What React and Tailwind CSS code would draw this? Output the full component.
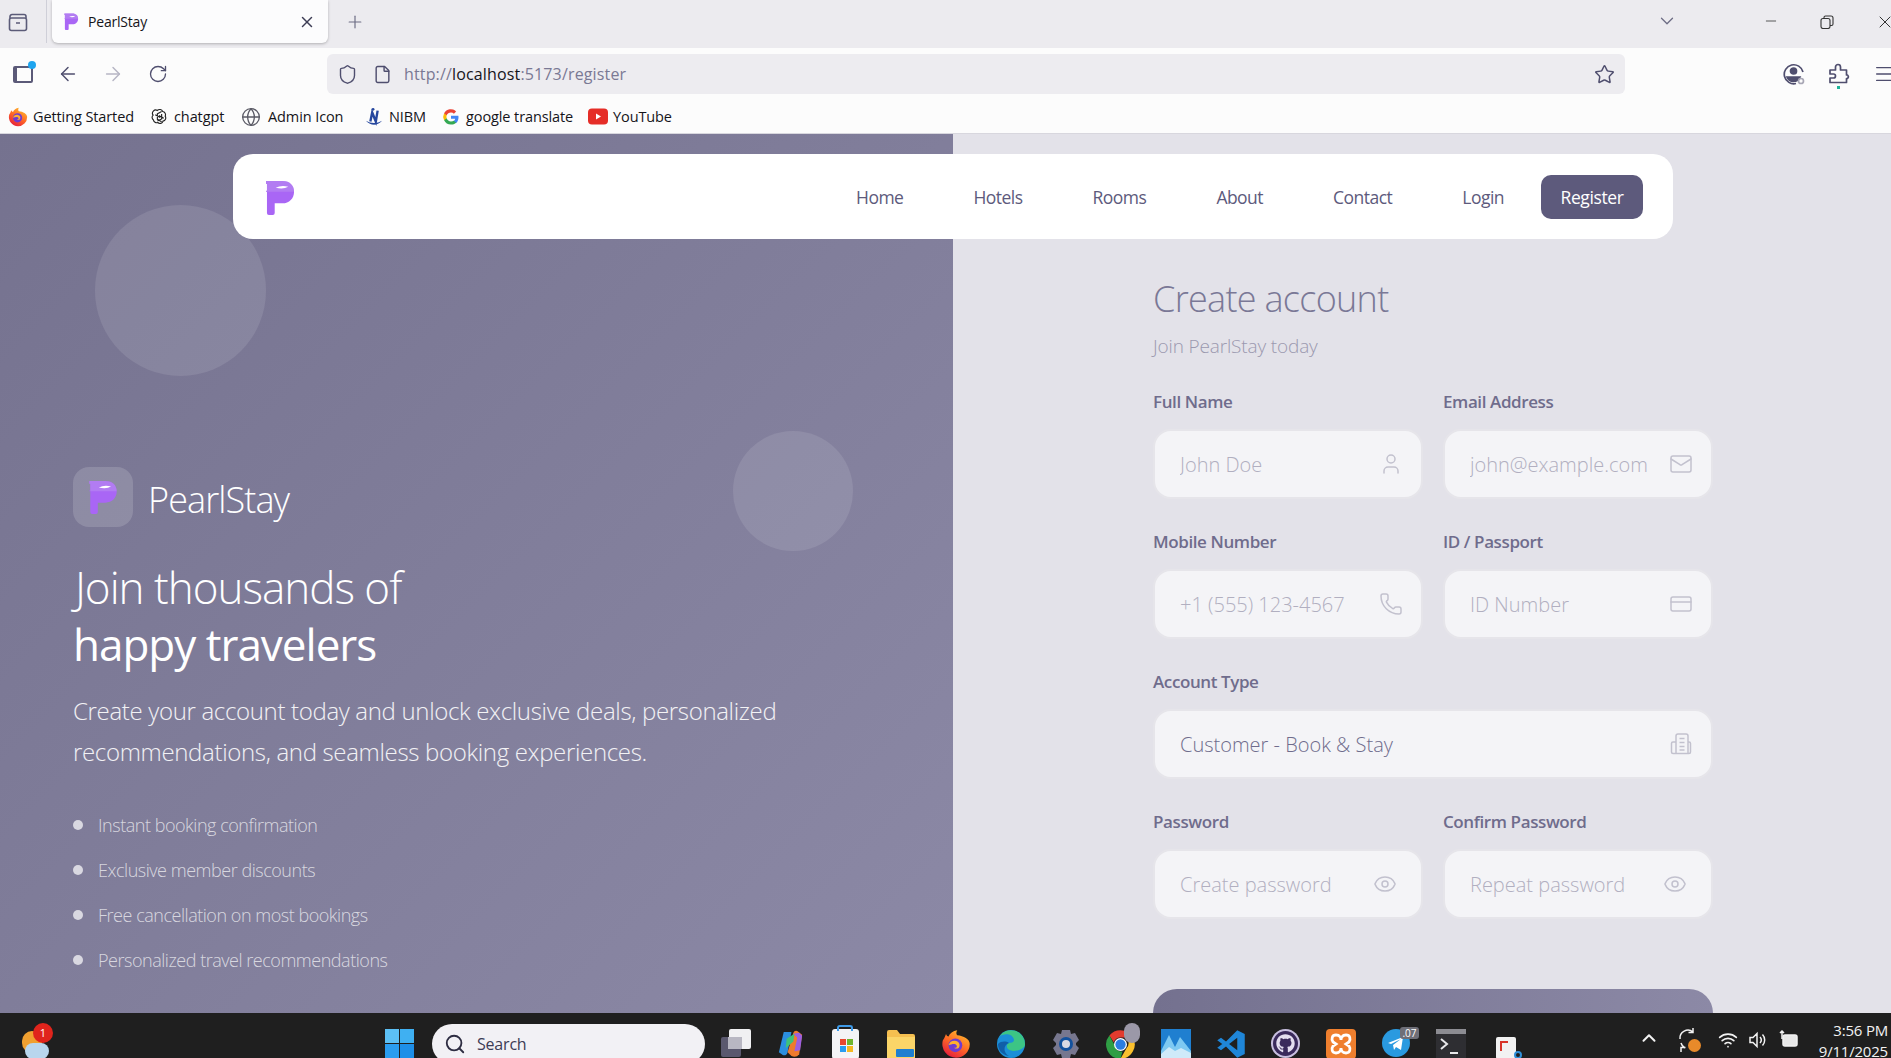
import { useId } from 'react'
import { FaGithub } from 'react-icons/fa'
import {
  ArrowLeft, ArrowRight, ChevronDown, ChevronUp, CreditCard, Eye, File, Globe, Mail, Menu, Minus, Phone, Plus,
  Search, RotateCw, Shield, Star, User, Wifi, X,
} from 'lucide-react'

const navLinks = ['Home', 'Hotels', 'Rooms', 'About', 'Contact', 'Login']

const perks = [
  'Instant booking confirmation',
  'Exclusive member discounts',
  'Free cancellation on most bookings',
  'Personalized travel recommendations',
]

function PearlLogo({ className }) {
  return (
    <svg viewBox="0 0 30 36" className={className}>
      <path d="M0 1H17C25 1 29 6 29 12C29 19 24 24 17 24H9V34Q9 36 7 36H3Q1 36 1 34V12H0V11H1V4H0Z" fill="#a966f5" />
      <path d="M0 1H17C25 1 29 6 29 12H1V4H0Z" fill="#b98af0" opacity="0.6" />
      <path d="M10 8Q16 5 23 7Q18 10 10 8Z" fill="#fff" />
    </svg>
  )
}

function BuildingIcon({ className }) {
  return (
    <svg viewBox="0 0 24 24" fill="none" stroke="currentColor" strokeWidth="1.5" className={className}>
      <path d="M7 21V4a2 2 0 0 1 2-2h8a2 2 0 0 1 2 2v17" />
      <path d="M7 10H4a1.5 1.5 0 0 0-1.5 1.5V20A1.5 1.5 0 0 0 4 21.5h16a1.5 1.5 0 0 0 1.5-1.5v-8.5A1.5 1.5 0 0 0 20 10h-1" />
      <path d="M10.5 6.5h5M10.5 10.5h5M10.5 14.5h5M10.5 18h5" />
    </svg>
  )
}

function FirefoxIcon({ className }) {
  const id = useId()
  return (
    <svg viewBox="0 0 24 24" className={className}>
      <defs>
        <linearGradient id={id} x1="0.8" y1="0" x2="0.2" y2="1">
          <stop offset="0" stopColor="#ffc22e" />
          <stop offset="0.5" stopColor="#ff6a26" />
          <stop offset="1" stopColor="#e3173f" />
        </linearGradient>
      </defs>
      <path d="M12 23A11 11 0 0 1 1.5 9C3 7 3.5 5 4 4c.5 1.5 1.5 2 2 2 1-2.500 3.500-4.500 7-5-1 1.500-1 3 0 4 5 .5 10 3 10 7A11 11 0 0 1 12 23Z" fill={`url(#${id})`} />
      <circle cx="11.500" cy="13" r="5.500" fill="#6e3bd1" />
      <path d="M6 13c1-3 3-4 6-3.500 2.500.5 3.500 3 2.500 5-1 1.500-3 1.500-4 .5 2 .5 3-1.500 1.500-2.500C10.500 11.500 8 12.500 6 13Z" fill="#ffb02e" />
    </svg>
  )
}

function ChromeIcon({ className }) {
  return (
    <svg viewBox="0 0 24 24" className={className}>
      <path d="M12 1a11 11 0 0 1 9.530 5.500H12a5.500 5.500 0 0 0-5.200 3.700L3.400 5A11 11 0 0 1 12 1Z" fill="#e33b2e" />
      <path d="M21.530 6.500A11 11 0 0 1 12 23l4.750-8.250A5.500 5.500 0 0 0 16 6.500Z" fill="#fbc02d" />
      <path d="M3.400 5l4.600 8.500A5 5 0 0 0 12 17.500h1.500L12 23A11 11 0 0 1 3.400 5Z" fill="#2f9e44" />
      <circle cx="12" cy="12" r="5" fill="#fff" />
      <circle cx="12" cy="12" r="4" fill="#2a7de1" />
    </svg>
  )
}

function BookmarkIcon({ kind }) {
  if (kind === 'firefox') return <FirefoxIcon className="h-5 w-5" />
  if (kind === 'chatgpt') {
    return (
      <svg viewBox="0 0 24 24" fill="none" stroke="#222" strokeWidth="1.600" className="h-[17px] w-[17px]">
        <path d="M9 3.500a4.500 4.500 0 0 1 7.500 1.500 4.500 4.500 0 0 1 3.500 6.500 4.500 4.500 0 0 1-3 7 4.500 4.500 0 0 1-7.500 2 4.500 4.500 0 0 1-6-3.500 4.500 4.500 0 0 1-.5-7A4.500 4.500 0 0 1 9 3.500Z" />
        <path d="M9 8v8l6 3.500M8.500 8.500 15 5M15 8.500v7l-6 3M6 9.500l7 4M18 14.500l-7-4" />
      </svg>
    )
  }
  if (kind === 'globe') return <Globe size={20} strokeWidth={1.600} className="-ml-[5px] text-[#5b5b66]" />
  if (kind === 'nibm') {
    return (
      <svg viewBox="0 0 20 22" className="h-5 w-5">
        <path d="M6 16 8 6l4 10 2-12" fill="none" stroke="#26479e" strokeWidth="2.600" />
        <path d="M1 15q9 9 18 0q-9 5-18 0Z" fill="#26479e" />
        <circle cx="9" cy="2.500" r="1.500" fill="#26479e" />
      </svg>
    )
  }
  if (kind === 'google') {
    return (
      <svg viewBox="0 0 24 24" className="h-[18px] w-[18px]">
        <path d="M22 12.200c0-.7-.1-1.400-.2-2H12v4h5.600a5 5 0 0 1-2 3.100v2.600h3.300c1.900-1.800 3.100-4.500 3.100-7.700Z" fill="#4285f4" />
        <path d="M12 22c2.800 0 5-.9 6.900-2.500l-3.300-2.600c-.9.600-2.100 1-3.600 1-2.700 0-5-1.800-5.800-4.300H2.800v2.700A10 10 0 0 0 12 22Z" fill="#34a853" />
        <path d="M6.200 13.600a6 6 0 0 1 0-3.800V7H2.800a10 10 0 0 0 0 9.300Z" fill="#fbbc05" />
        <path d="M12 6c1.500 0 2.900.5 3.900 1.500l2.900-2.900A10 10 0 0 0 2.800 7l3.400 2.700C7 7.800 9.300 6 12 6Z" fill="#ea4335" />
      </svg>
    )
  }
  return (
    <svg viewBox="0 0 20 16" className="h-[17px] w-5">
      <rect width="20" height="16" rx="4" fill="#e52d27" />
      <path d="M8 5l5 3-5 3Z" fill="#fff" />
    </svg>
  )
}

const bookmarks = [
  { kind: 'firefox', label: 'Getting Started', w: 'w-[141px]' },
  { kind: 'chatgpt', label: 'chatgpt', w: 'w-[94px]' },
  { kind: 'globe', label: 'Admin Icon', w: 'w-[121px]' },
  { kind: 'nibm', label: 'NIBM', w: 'w-[77px]' },
  { kind: 'google', label: 'google translate', w: 'w-[147px]' },
  { kind: 'youtube', label: 'YouTube', w: 'w-[90px]' },
]

function BrowserChrome() {
  return (
    <div className="shrink-0 bg-[#fcfcfc] text-[#15141a]">
      <div className="flex h-[48px] items-start bg-[#ecebef]">
        <div className="flex h-[43px] w-[47px] items-center border-r border-[#cfcfd8] pl-[8px] text-[#5b5b78]">
          <svg viewBox="0 0 20 20" fill="none" stroke="currentColor" strokeWidth="1.600" className="h-5 w-5">
            <rect x="1.500" y="6" width="17" height="12.500" rx="2" />
            <path d="M4 2.500h12a2 2 0 0 1 2 2V6M4 2.500a2 2 0 0 0-2 2V6M8 11h4" />
          </svg>
        </div>
        <div className="ml-[5px] flex h-[43px] w-[276px] items-center rounded-b-[6px] bg-[#fcfcfd] pl-[12px] pr-[12px] shadow-[0_1px_3px_rgba(0,0,0,0.25)]">
          <PearlLogo className="h-[17px] w-[15px]" />
          <span className="ml-[9px] text-[14px] tracking-[-0.2px]">PearlStay</span>
          <X size={18} className="ml-auto text-[#3d3d55]" />
        </div>
        <Plus size={20} strokeWidth={1.400} className="ml-[17px] mt-[12px] text-[#6c6c84]" />
        <ChevronDown size={22} strokeWidth={1.400} className="ml-auto mr-[85px] mt-[10px] text-[#6c6c84]" />
        <Minus size={16} strokeWidth={1.200} className="mr-[41px] mt-[13px] text-[#333]" />
        <svg viewBox="0 0 14 14" fill="none" stroke="#333" strokeWidth="1.100" className="mr-[41px] mt-[15px] h-[14px] w-[14px]">
          <rect x="1" y="3.500" width="9" height="10" rx="2" />
          <path d="M4 3V2.500A1.500 1.500 0 0 1 5.500 1H11a2 2 0 0 1 2 2v6a1.500 1.500 0 0 1-1.500 1.500H10" />
        </svg>
        <X size={20} strokeWidth={1.200} className="mr-[-4px] mt-[12px] text-[#333]" />
      </div>
      <div className="flex h-[52px] items-center text-[#4f4e6e]">
        <div className="relative ml-[13px] h-[17px] w-[20px] shrink-0 rounded-[2px] border-2 border-[#5b5a78] border-l-[4px]">
          <span className="absolute -right-[5px] -top-[7px] h-[8px] w-[8px] rounded-full bg-[#1fa5ef]" />
        </div>
        <ArrowLeft size={22} strokeWidth={1.600} className="ml-[24px] shrink-0" />
        <ArrowRight size={22} strokeWidth={1.600} className="ml-[23px] shrink-0 text-[#b6b5c4]" />
        <RotateCw size={20} strokeWidth={1.600} className="ml-[24px] shrink-0" />
        <div className="ml-[159px] flex h-[40px] w-[1298px] shrink-0 items-center rounded-[6px] bg-[#edecf0] pl-[10px] pr-[10px]">
          <Shield size={21} strokeWidth={1.600} />
          <File size={19} strokeWidth={1.800} className="ml-[15px]" />
          <span className="ml-[12px] text-[16px] tracking-[0.15px] text-[#7a7994]">
            http://<span className="text-[#15141a]">localhost</span>:5173/register
          </span>
          <Star size={21} strokeWidth={1.700} className="ml-auto" />
        </div>
        <div className="relative ml-[158px] h-[22px] w-[22px] shrink-0">
          <svg viewBox="0 0 22 22" fill="none" stroke="currentColor" strokeWidth="1.700" className="h-[22px] w-[22px]">
            <path d="M20 9a9.500 9.500 0 1 0-7 11.500" />
            <circle cx="10.500" cy="8" r="3" fill="currentColor" />
            <path d="M4 14h13a7 7 0 0 1-13 0Z" fill="currentColor" />
            <circle cx="18" cy="18" r="2.500" stroke="#a8a7b5" />
          </svg>
        </div>
        <div className="relative ml-[23px] flex h-[24px] w-[22px] shrink-0">
          <svg viewBox="0 0 22 24" fill="none" stroke="currentColor" strokeWidth="1.700" className="h-[24px] w-[22px]">
            <path d="M2 8H7.500V5a2.500 2.500 0 0 1 5 0v3H18.500V13h1a2.500 2.500 0 0 1 0 3.500h-1V20.500H2V16h3.500a2 2 0 0 0 0-4H2Z" strokeLinejoin="round" />
          </svg>
          <span className="absolute left-[9px] top-[24px] h-[3px] w-[3px] bg-[#1fb39a]" />
        </div>
        <Menu size={22} strokeWidth={1.500} className="ml-[23px] shrink-0" />
      </div>
      <div className="flex h-[33px] items-center pl-[8px] text-[14.500px]">
        {bookmarks.map((b) => (
          <div key={b.label} className={`flex items-center gap-[5px] ${b.w}`}>
            <span className="flex w-[20px] shrink-0 justify-center">
              <BookmarkIcon kind={b.kind} />
            </span>
            <span className="tracking-[-0.1px]">{b.label}</span>
          </div>
        ))}
      </div>
    </div>
  )
}

function LeftPanel() {
  return (
    <section className="relative flex w-[953px] shrink-0 flex-col overflow-hidden bg-[linear-gradient(135deg,#75728f,#8c89a6)] pl-[73px] pt-[333px] text-white">
      <span className="absolute left-[95px] top-[71px] h-[171px] w-[171px] rounded-full bg-white/10" />
      <span className="absolute left-[733px] top-[297px] h-[120px] w-[120px] rounded-full bg-white/10" />
      <div className="relative flex items-center gap-[15px]">
        <div className="flex h-[60px] w-[60px] items-center justify-center rounded-[16px] bg-white/15">
          <PearlLogo className="h-[34px] w-[29px]" />
        </div>
        <span className="pt-[6px] text-[36px] font-light tracking-[-0.9px]">PearlStay</span>
      </div>
      <h1 className="relative mt-[32px] text-[44px] font-light leading-[57px] tracking-[-1px]">
        <span className="pl-[2px]">Join thousands of</span>
        <br />
        <span className="font-normal">happy travelers</span>
      </h1>
      <p className="relative mt-[17px] w-[760px] text-[24px] font-light leading-[41px] tracking-[-0.33px] text-white/90">
        Create your account today and unlock exclusive deals, personalized recommendations, and seamless booking experiences.
      </p>
      <ul className="relative mt-[38px] flex flex-col gap-[15px]">
        {perks.map((perk) => (
          <li key={perk} className="flex h-[30px] items-center text-[18px] font-light tracking-[-0.47px] text-white/70">
            <span className="mr-[15px] h-[10px] w-[10px] rounded-full bg-white/70" />
            {perk}
          </li>
        ))}
      </ul>
    </section>
  )
}

function Field({ label, placeholder, icon, iconClass = 'mr-[18px]', wide, value }) {
  return (
    <div className={wide ? 'col-span-2' : ''}>
      <label className="mb-[15px] block h-[24px] text-[17px] font-semibold leading-[24px] tracking-[-0.4px] text-[#6f6c8c]">{label}</label>
      <div className="flex h-[70px] items-center rounded-[18px] border-2 border-[#e6e5ea] bg-[#f4f4f7]">
        <input
          readOnly
          value={value}
          placeholder={placeholder}
          className="h-full min-w-0 flex-1 bg-transparent pl-[25px] text-[20px] font-light text-[#6f6c8c] outline-none placeholder:text-[#b1afc0]"
        />
        <span className={`flex text-[#c2c1ce] ${iconClass}`}>{icon}</span>
      </div>
    </div>
  )
}

function RightPanel() {
  return (
    <section className="min-w-0 flex-1 bg-[#e3e2e9] pl-[200px] pt-[140px]">
      <div className="w-[560px]">
        <h2 className="text-[36px] font-light leading-[50px] tracking-[-0.7px] text-[#7a7896]">Create account</h2>
        <p className="mt-[8px] text-[19px] font-light leading-[28px] tracking-[-0.15px] text-[#9b99af]">Join PearlStay today</p>
        <div className="mt-[30px] grid grid-cols-2 gap-x-[20px] gap-y-[31px]">
          <Field label="Full Name" placeholder="John Doe" icon={<User size={24} strokeWidth={1.500} />} />
          <Field label="Email Address" placeholder="john@example.com" icon={<Mail size={24} strokeWidth={1.500} />} />
          <Field label="Mobile Number" placeholder="+1 (555) 123-4567" icon={<Phone size={24} strokeWidth={1.500} />} />
          <Field label="ID / Passport" placeholder="ID Number" icon={<CreditCard size={24} strokeWidth={1.500} />} />
          <Field wide label="Account Type" value="Customer - Book & Stay" icon={<BuildingIcon className="h-6 w-6" />} />
          <Field label="Password" placeholder="Create password" iconClass="mr-[24px]" icon={<Eye size={24} strokeWidth={1.500} />} />
          <Field label="Confirm Password" placeholder="Repeat password" iconClass="mr-[24px]" icon={<Eye size={24} strokeWidth={1.500} />} />
        </div>
        <button className="mt-[70px] h-[70px] w-full rounded-[24px] bg-[linear-gradient(90deg,#74718f,#8c89a6)]" />
      </div>
    </section>
  )
}

function Navbar() {
  return (
    <nav className="absolute left-[233px] top-[20px] flex h-[85px] w-[1440px] items-center rounded-[20px] bg-white pl-[33px] pr-[30px]">
      <PearlLogo className="mt-[2px] h-[35px] w-[29px]" />
      <div className="ml-auto flex items-center gap-[70px] pt-[2px] text-[17.500px] tracking-[-0.52px] text-[#5d5a7c]">
        {navLinks.map((link) => (
          <span key={link}>{link}</span>
        ))}
      </div>
      <button className="ml-[37px] h-[44px] w-[102px] rounded-[10px] bg-[#5d5a7c] pt-[2px] text-[17.500px] tracking-[-0.4px] text-white">Register</button>
    </nav>
  )
}

function TaskIcon({ children, className = '' }) {
  return <div className={`flex w-[55px] shrink-0 justify-center ${className}`}>{children}</div>
}

function Taskbar() {
  return (
    <footer className="flex h-[45px] shrink-0 overflow-hidden bg-[#1f1f1f]">
      <div className="relative ml-[22px] mt-[12px] h-[33px] w-[30px]">
        <span className="absolute left-0 top-[6px] h-[22px] w-[20px] rounded-full bg-[#f0a030]" />
        <span className="absolute left-[3px] top-[18px] h-[16px] w-[24px] rounded-full bg-[#b9d6ee]" />
        <span className="absolute left-[11px] top-[-2px] flex h-[20px] w-[20px] items-center justify-center rounded-full bg-[#e0241c] text-[11px] text-white">1</span>
      </div>
      <div className="ml-[333px] mt-[16px] grid h-[29px] w-[29px] grid-cols-2 gap-[1px]">
        <span className="bg-[#5cc0f5]" />
        <span className="bg-[#3fb0f2]" />
        <span className="bg-[#2a9df0]" />
        <span className="bg-[#1e8fe8]" />
      </div>
      <div className="ml-[18px] mt-[11px] flex h-[40px] w-[273px] items-center rounded-full bg-[#f2f1f5] pl-[12px] text-[#3d3c55]">
        <Search size={22} strokeWidth={2} className="text-[#2e2d42]" />
        <span className="ml-[11px] text-[16px] tracking-[-0.2px]">Search</span>
      </div>
      <div className="ml-[3px] mt-[16px] flex items-start">
        <TaskIcon>
          <div className="relative h-[28px] w-[30px]">
            <span className="absolute bottom-0 left-0 h-[20px] w-[20px] rounded-[2px] bg-[#5a586e]" />
            <span className="absolute right-0 top-0 h-[20px] w-[22px] rounded-[2px] bg-[#f0f0f2]" />
            <span className="absolute left-[7px] top-[8px] h-[12px] w-[14px] bg-[#b8b7c2]" />
          </div>
        </TaskIcon>
        <TaskIcon>
          <svg viewBox="0 0 30 30" className="h-[29px] w-[29px]">
            <path d="M8 3h8l-4 21q-1 4-5 3L3 24Z" fill="#2b8fe0" />
            <path d="M12 24 18 4q1-3 4-2l5 4-3 20q-3 4-8 2Z" fill="#ef7b2d" />
            <path d="M18 5l6-1 3 3-2 15-6 1 3-14Z" fill="#9c5fe0" />
            <path d="M11 10l8-5-1 8-8 7Z" fill="#3fc27a" />
          </svg>
        </TaskIcon>
        <TaskIcon>
          <div className="relative h-[30px] w-[27px] rounded-[3px] bg-[#f4f4f6]">
            <span className="absolute left-[5px] top-[-4px] h-[6px] w-[16px] rounded-t-[3px] border-2 border-b-0 border-[#3f9be8]" />
            <div className="absolute left-[8px] top-[10px] grid grid-cols-2 gap-[1px]">
              <span className="h-[6px] w-[6px] bg-[#e8472f]" />
              <span className="h-[6px] w-[6px] bg-[#6fb52e]" />
              <span className="h-[6px] w-[6px] bg-[#2a9df0]" />
              <span className="h-[6px] w-[6px] bg-[#f5b821]" />
            </div>
          </div>
        </TaskIcon>
        <TaskIcon>
          <svg viewBox="0 0 30 30" className="h-[30px] w-[30px]">
            <path d="M1 3a2 2 0 0 1 2-2h8l3 4h13a2 2 0 0 1 2 2v23H1Z" fill="#f5bf50" />
            <path d="M1 8h28v22H1Z" fill="#fbd568" />
            <rect x="10" y="20" width="18" height="8" rx="1" fill="#1f7fd0" />
          </svg>
        </TaskIcon>
        <TaskIcon>
          <FirefoxIcon className="h-[30px] w-[30px]" />
        </TaskIcon>
        <TaskIcon>
          <svg viewBox="0 0 30 30" className="h-[30px] w-[30px]">
            <circle cx="15" cy="15" r="14" fill="#1b8fd8" />
            <path d="M29 16A14 14 0 0 0 3 8c4-4 14-4 15 3 0 2-2 3-5 3-2 0-5 7 4 8 5 0 11-2 12-6Z" fill="#3cc585" />
            <path d="M13 14c-6 2-6 10 0 13-7-1-11-6-11-12 3-3 8-3 11-1Z" fill="#105fa8" />
          </svg>
        </TaskIcon>
        <TaskIcon>
          <svg viewBox="0 0 30 30" className="h-[30px] w-[30px]">
            <path d="M11 1h8l1 4 4-1 4 7-3 3v2l3 3-4 7-4-1-1 4h-8l-1-4-4 1-4-7 3-3v-2L2 11l4-7 4 1Z" fill="#77778f" />
            <circle cx="15" cy="15" r="7" fill="#12519e" />
            <circle cx="15" cy="15" r="4" fill="#d9d9e4" />
          </svg>
        </TaskIcon>
        <TaskIcon>
          <div className="relative">
            <ChromeIcon className="h-[31px] w-[31px]" />
            <span className="absolute -right-[4px] -top-[6px] h-[20px] w-[16px] rounded-full bg-[#9b98a8]" />
          </div>
        </TaskIcon>
        <TaskIcon>
          <svg viewBox="0 0 30 30" className="h-[30px] w-[30px]">
            <rect width="30" height="30" fill="#1f7fd0" />
            <path d="M0 22 8 6l6 12 5-10 11 14v8H0Z" fill="#7ec9f2" />
            <path d="M0 25 8 18l6 4 6-3 10 5v6H0Z" fill="#cfeaf9" />
          </svg>
        </TaskIcon>
        <TaskIcon>
          <svg viewBox="0 0 24 24" className="h-[30px] w-[30px]">
            <path d="M17 1 23 4v16l-6 3-9-9-4 3-3-2 4-3-4-3 3-2 4 3Z" fill="#1f86d8" />
            <path d="M17 7 10.500 12l6.500 5Z" fill="#1f1f1f" />
          </svg>
        </TaskIcon>
        <TaskIcon>
          <div className="flex h-[29px] w-[29px] items-center justify-center rounded-full bg-[#c8bfe0]">
            <div className="flex h-[25px] w-[25px] items-center justify-center rounded-full bg-[#3a2a5c] text-[#e4def0]">
              <FaGithub size={19} />
            </div>
          </div>
        </TaskIcon>
        <TaskIcon>
          <svg viewBox="0 0 30 30" className="h-[30px] w-[30px]">
            <rect width="30" height="30" rx="4" fill="#ef7f2e" />
            <path d="M10 6C6 6 5 10 7 13l3 2-3 2c-2 3-1 7 3 7s5-3 5-5c0 2 1 5 5 5s5-4 3-7l-3-2 3-2c2-3 1-7-3-7s-5 3-5 5c0-2-1-5-5-5Z" fill="none" stroke="#fff" strokeWidth="2.800" />
          </svg>
        </TaskIcon>
        <TaskIcon>
          <div className="relative">
            <svg viewBox="0 0 28 28" className="h-[28px] w-[28px]">
              <circle cx="14" cy="14" r="14" fill="#2a9ae0" />
              <path d="M6 14 21 8l-2 13-5-3-2 3-1-5 8-6-10 5Z" fill="#fff" />
            </svg>
            <span className="absolute -right-[9px] -top-[2px] rounded-[3px] bg-[#6f6f78] px-[2px] text-[10px] leading-[12px] text-white">.07</span>
          </div>
        </TaskIcon>
        <TaskIcon>
          <div className="h-[30px] w-[30px] bg-[#2e2e32]">
            <div className="h-[5px] bg-[#8c8c92]" />
            <svg viewBox="0 0 30 25" fill="none" stroke="#e8e8ea" strokeWidth="2" className="h-[25px] w-[30px]">
              <path d="M5 5l6 5-6 5M14 19h8" />
            </svg>
          </div>
        </TaskIcon>
        <TaskIcon>
          <div className="relative mt-[8px] h-[22px] w-[20px] rounded-[2px] bg-[#f2f2f2]">
            <div className="ml-[4px] mt-[4px] h-[10px] w-[8px] border-l-2 border-t-2 border-dashed border-[#d8352a]" />
            <span className="absolute -right-[6px] bottom-0 h-[8px] w-[8px] rounded-full border-2 border-[#2f8fd8]" />
          </div>
        </TaskIcon>
      </div>
      <div className="ml-auto mr-[3px] flex items-start text-[#f2f2f2]">
        <ChevronUp size={22} strokeWidth={2.200} className="mr-[17px] mt-[14px]" />
        <div className="relative mr-[19px] mt-[14px] h-[26px] w-[22px]">
          <svg viewBox="0 0 22 26" fill="none" stroke="currentColor" strokeWidth="1.500" className="h-[26px] w-[22px]">
            <path d="M3 12a8 8 0 0 1 13-7M16 1v4.500h-4.500M4 16a8 8 0 0 0 4 5M4 25v-4.500h4.500" />
          </svg>
          <span className="absolute bottom-[1px] right-[-2px] h-[13px] w-[13px] rounded-full bg-[#e88a2a]" />
        </div>
        <Wifi size={20} strokeWidth={2} className="mr-[9px] mt-[17px]" />
        <svg viewBox="0 0 20 20" fill="none" stroke="currentColor" strokeWidth="1.500" className="mr-[12px] mt-[17px] h-5 w-5">
          <path d="M3 7.500h3L10 3.500v13L6 12.500H3ZM13 7a4.500 4.500 0 0 1 0 6M15.500 4.500a8 8 0 0 1 0 11" />
        </svg>
        <svg viewBox="0 0 20 20" fill="none" stroke="currentColor" strokeWidth="1.500" className="mr-[20px] mt-[17px] h-5 w-5">
          <rect x="4" y="5" width="14" height="11" rx="2" fill="#e8e8e8" />
          <path d="M3 1v8M1 3l2-2 2 2" />
        </svg>
        <div className="mt-[7px] text-right text-[15px] leading-[21px] tracking-[-0.2px]">
          <div>3:56 PM</div>
          <div>9/11/2025</div>
        </div>
      </div>
    </footer>
  )
}

export default function App() {
  return (
    <div className="flex h-[1058px] w-[1891px] flex-col overflow-hidden font-['Open_Sans',sans-serif]">
      <BrowserChrome />
      <main className="relative flex min-h-0 flex-1 overflow-hidden border-t border-[#d8d7de]">
        <LeftPanel />
        <RightPanel />
        <Navbar />
      </main>
      <Taskbar />
    </div>
  )
}
